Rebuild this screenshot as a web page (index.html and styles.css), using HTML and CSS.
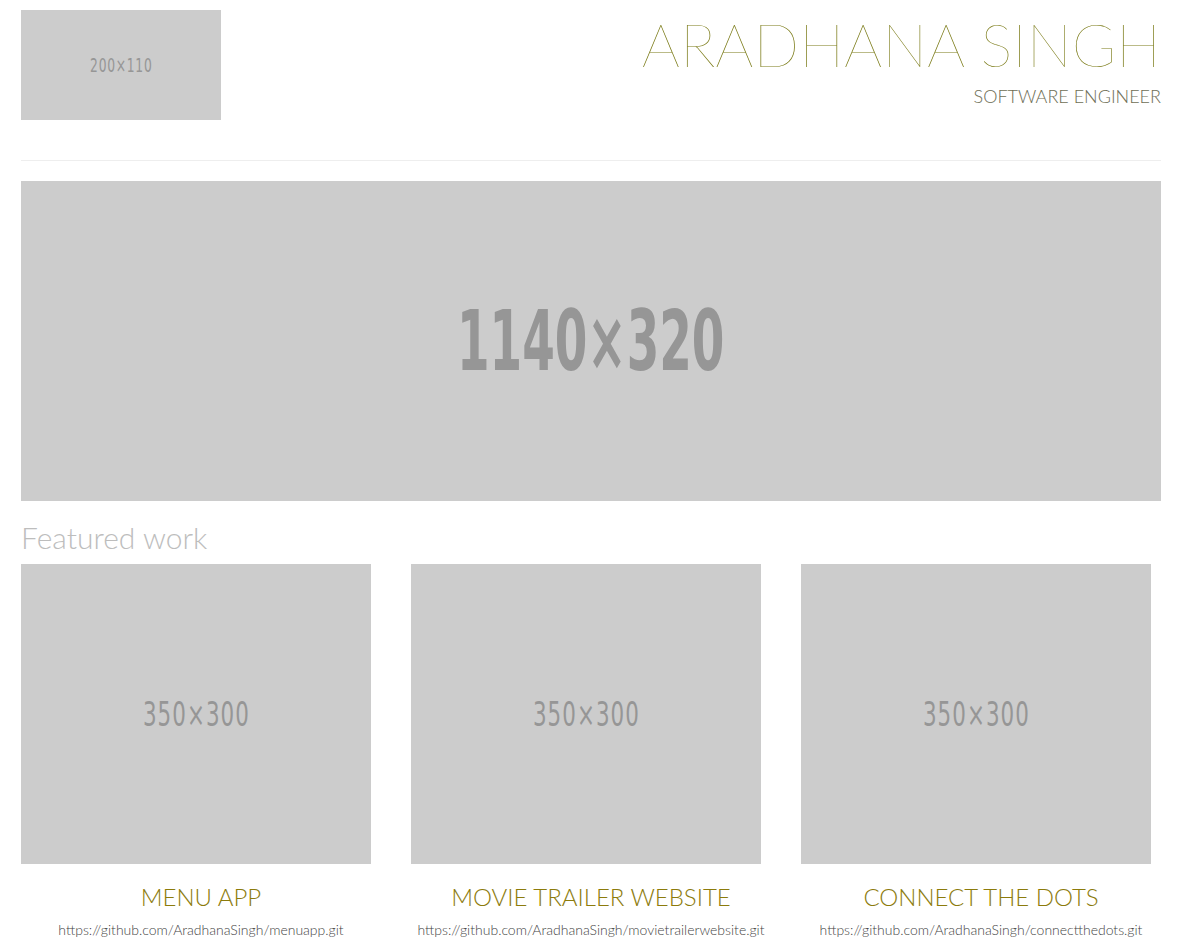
FILE: index.html
```html
<!DOCTYPE html>
<html>
<head>
<meta charset="utf-8">
<title>Aradhana Singh</title>
<link rel="stylesheet" href="styles.css">
</head>
<body>
<div class="container">
  <header class="header">
    <div class="ph ph-logo"><span>200×110</span></div>
    <div class="title">
      <h1 class="name">ARADHANA SINGH</h1>
      <div class="role">SOFTWARE ENGINEER</div>
    </div>
  </header>
  <hr class="rule">
  <div class="ph ph-hero"><span>1140×320</span></div>
  <h2 class="featured">Featured work</h2>
  <div class="works">
    <div class="work">
      <div class="ph ph-card"><span>350×300</span></div>
      <h3 class="work-title">MENU APP</h3>
      <p class="work-link">https://github.com/AradhanaSingh/menuapp.git</p>
    </div>
    <div class="work">
      <div class="ph ph-card"><span>350×300</span></div>
      <h3 class="work-title">MOVIE TRAILER WEBSITE</h3>
      <p class="work-link">https://github.com/AradhanaSingh/movietrailerwebsite.git</p>
    </div>
    <div class="work">
      <div class="ph ph-card"><span>350×300</span></div>
      <h3 class="work-title">CONNECT THE DOTS</h3>
      <p class="work-link">https://github.com/AradhanaSingh/connectthedots.git</p>
    </div>
  </div>
</div>
</body>
</html>
```

FILE: styles.css
```css
* { box-sizing: border-box; }
html, body { margin: 0; padding: 0; background: #fff; }
body { font-family: Lato, "Open Sans", sans-serif; color: #555; }
.container { width: 1140px; margin: 0 0 0 21px; padding-top: 10px; }
.header { display: flex; justify-content: space-between; align-items: flex-start; }
.ph { background: #cccccc; color: #969696; display: flex; align-items: center; justify-content: center;
  font-family: "DejaVu Sans Condensed", "Liberation Sans Narrow", sans-serif; }
.ph-logo { width: 200px; height: 110px; font-size: 19px; letter-spacing: 1px; }
.ph-logo span { transform: scaleX(0.72); }
.ph-hero { width: 1140px; height: 320px; font-size: 84px; font-weight: bold; }
.ph-hero span { transform: scaleX(0.62); }
.ph-card { width: 350px; height: 300px; font-size: 34px; letter-spacing: 1.5px; }
.ph-card span { transform: scaleX(0.7); }
.title { text-align: right; }
.name { margin: 0; padding-top: 4px; font-weight: 100; font-size: 60px; line-height: 60px; color: #7d7d1b; letter-spacing: 0; margin-right: 0; }
.role { margin-top: 12px; font-size: 18px; font-weight: 300; color: #6e6e55; line-height: 20px; }
.rule { margin: 40px 0 20px; border: 0; border-top: 1px solid #eeeeee; height: 0; }
.featured { margin: 19px 0 10px; font-size: 30px; font-weight: 300; color: #bdbdbd; line-height: 34px; }
.works { display: grid; grid-template-columns: repeat(3, 360px); column-gap: 30px; }
.work { text-align: center; }
.work-title { margin: 18px 0 0; font-size: 24px; font-weight: 300; color: #8c7b0c; line-height: 30px; }
.work-link { margin: 8px 0 0; font-size: 14px; font-weight: 300; color: #444; line-height: 20px; }
```
